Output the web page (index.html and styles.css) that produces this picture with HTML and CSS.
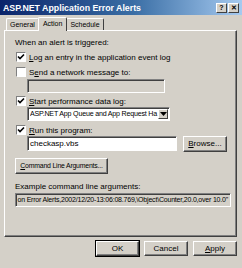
FILE: index.html
```html
<!DOCTYPE html>
<html lang="en">
<head>
    <meta charset="UTF-8">
    <title>ASP.NET Application Error Alerts</title>
    <link rel="stylesheet" href="styles.css">
</head>
<body>
    <div class="window">
        <div class="titlebar">
            <span class="title">ASP.NET Application Error Alerts</span>
            <span class="tbtn">?</span>
            <span class="tbtn">&#x2715;</span>
        </div>
        <div class="client">
            <div class="tabs">
                <span class="tab">General</span>
                <span class="tab active">Action</span>
                <span class="tab">Schedule</span>
            </div>
            <div class="panel">
                <div class="label">When an alert is triggered:</div>

                <div class="check-row r1">
                    <span class="box"><svg viewBox="0 0 8 8" width="8" height="8"><path d="M1 3.5 L3 5.5 L7 1.5" fill="none" stroke="#000" stroke-width="1.6"/></svg></span>
                    <span><u>L</u>og an entry in the application event log</span>
                </div>

                <div class="check-row r2">
                    <span class="box"></span>
                    <span>S<u>e</u>nd a network message to:</span>
                </div>
                <div class="field disabled w-net"></div>

                <div class="check-row r3">
                    <span class="box"><svg viewBox="0 0 8 8" width="8" height="8"><path d="M1 3.5 L3 5.5 L7 1.5" fill="none" stroke="#000" stroke-width="1.6"/></svg></span>
                    <span><u>S</u>tart performance data log:</span>
                </div>
                <div class="select">
                    <span class="select-text">ASP.NET App Queue and App Request Ha</span>
                    <span class="drop"><svg viewBox="0 0 7 4" width="7" height="4"><path d="M0 0 H7 L3.5 4 Z" fill="#000"/></svg></span>
                </div>

                <div class="check-row r4">
                    <span class="box"><svg viewBox="0 0 8 8" width="8" height="8"><path d="M1 3.5 L3 5.5 L7 1.5" fill="none" stroke="#000" stroke-width="1.6"/></svg></span>
                    <span><u>R</u>un this program:</span>
                </div>
                <div class="prog-row">
                    <div class="field w-prog">checkasp.vbs</div>
                    <span class="btn browse"><u>B</u>rowse...</span>
                </div>

                <span class="btn cmd"><u>C</u>ommand Line Arguments...</span>

                <div class="label example">Example command line arguments:</div>
                <div class="field readonly"><span>on Error Alerts,2002/12/20-13:06:08.769,\Object\Counter,20.0,over 10.0"</span></div>
            </div>
            <div class="footer">
                <span class="btn default">OK</span>
                <span class="btn">Cancel</span>
                <span class="btn"><u>A</u>pply</span>
            </div>
        </div>
    </div>
</body>
</html>
```

FILE: styles.css
```css
body {
    margin: 0;
    background-color: #d4d0c8;
    font-family: "Liberation Sans", Arial, sans-serif;
    font-size: 8px;
    color: #000;
}

.window {
    width: 242px;
    height: 268px;
    background-color: #d4d0c8;
    overflow: hidden;
}

.titlebar {
    height: 15px;
    display: flex;
    align-items: center;
    padding: 0 3px;
    background: linear-gradient(to right, #0a246a, #3a6ea5 55%, #a6caf0);
    color: #fff;
}

.title {
    flex: 1;
    font-weight: bold;
    font-size: 8.8px;
}

.tbtn {
    width: 9px;
    height: 8px;
    margin-left: 1px;
    background-color: #d4d0c8;
    color: #000;
    font-weight: bold;
    font-size: 7px;
    line-height: 8px;
    text-align: center;
    border-top: 1px solid #fff;
    border-left: 1px solid #fff;
    border-right: 1px solid #404040;
    border-bottom: 1px solid #404040;
}

.client {
    padding: 2px 5px 0 4px;
}

.tabs {
    display: flex;
    align-items: flex-end;
    height: 13px;
    padding-left: 2px;
    font-size: 7px;
}

.tab {
    height: 11px;
    line-height: 11px;
    padding: 0 3px;
    border-top: 1px solid #fff;
    border-left: 1px solid #fff;
    border-right: 1px solid #404040;
    border-top-left-radius: 2px;
    border-top-right-radius: 2px;
}

.tab.active {
    height: 13px;
    line-height: 12px;
    padding: 0 4px;
    margin: 0 -1px -1px;
    position: relative;
    z-index: 1;
    background-color: #d4d0c8;
}

.panel {
    height: 198px;
    padding: 7px 9px 0 10px;
    border-top: 1px solid #fff;
    border-left: 1px solid #fff;
    border-right: 1px solid #404040;
    border-bottom: 1px solid #404040;
    box-shadow: inset -1px -1px 0 #808080;
}

.label {
    height: 10px;
    line-height: 10px;
}

.check-row {
    display: flex;
    align-items: center;
    gap: 3px;
    height: 10px;
    padding-left: 1px;
}

.r1 { margin-top: 4px; }
.r2 { margin-top: 5px; }
.r3 { margin-top: 3px; }
.r4 { margin-top: 4px; }

.box {
    width: 8px;
    height: 8px;
    background-color: #fff;
    border-top: 1px solid #808080;
    border-left: 1px solid #808080;
    border-right: 1px solid #fff;
    border-bottom: 1px solid #fff;
}

.box svg {
    display: block;
}

.field {
    height: 12px;
    line-height: 12px;
    padding: 0 2px;
    background-color: #fff;
    border-top: 1px solid #808080;
    border-left: 1px solid #808080;
    border-right: 1px solid #fff;
    border-bottom: 1px solid #fff;
    box-shadow: inset 1px 1px 0 #404040;
    white-space: nowrap;
    overflow: hidden;
}

.field.disabled {
    background-color: #d4d0c8;
}

.w-net {
    width: 132px;
    margin: 2px 0 0 12px;
}

.select {
    display: flex;
    align-items: center;
    width: 138px;
    height: 12px;
    margin: 1px 0 0 12px;
    padding: 0 1px 0 2px;
    background-color: #fff;
    border-top: 1px solid #808080;
    border-left: 1px solid #808080;
    border-right: 1px solid #fff;
    border-bottom: 1px solid #fff;
    box-shadow: inset 1px 1px 0 #404040;
}

.select-text {
    flex: 1;
    white-space: nowrap;
    overflow: hidden;
    font-size: 7.1px;
    letter-spacing: -0.2px;
}

.drop {
    display: flex;
    align-items: center;
    justify-content: center;
    width: 8px;
    height: 8px;
    background-color: #d4d0c8;
    border-top: 1px solid #fff;
    border-left: 1px solid #fff;
    border-right: 1px solid #404040;
    border-bottom: 1px solid #404040;
}

.prog-row {
    display: flex;
    align-items: center;
    gap: 6px;
    height: 17px;
    margin-left: 12px;
}

.w-prog {
    width: 147px;
    height: 13px;
    line-height: 13px;
}

.btn {
    display: inline-block;
    height: 14px;
    line-height: 14px;
    text-align: center;
    white-space: nowrap;
    background-color: #d4d0c8;
    border-top: 1px solid #fff;
    border-left: 1px solid #fff;
    border-right: 1px solid #404040;
    border-bottom: 1px solid #404040;
    box-shadow: inset -1px -1px 0 #808080;
}

.browse {
    width: 43px;
}

.cmd {
    width: 91px;
    margin-top: 6px;
    font-size: 6.9px;
    letter-spacing: -0.2px;
}

.example {
    margin-top: 8px;
}

.readonly {
    display: flex;
    justify-content: flex-end;
    width: 210px;
    margin-top: 1px;
    background-color: #d4d0c8;
    font-size: 7px;
    letter-spacing: -0.2px;
}

.footer {
    display: flex;
    justify-content: flex-end;
    gap: 5px;
    margin-top: 4px;
}

.footer .btn {
    width: 42px;
    height: 13px;
    line-height: 13px;
}

.footer .default {
    outline: 1px solid #000;
    width: 41px;
}
```
